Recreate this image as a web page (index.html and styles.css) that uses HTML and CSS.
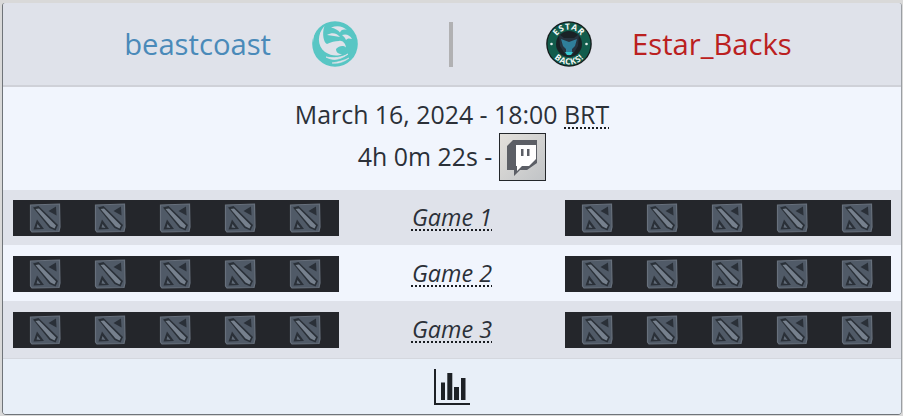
FILE: index.html
```html
<!DOCTYPE html>
<html lang="en">
<head>
<meta charset="utf-8">
<title>Match</title>
<link rel="stylesheet" href="styles.css">
</head>
<body>
<svg class="defs" width="0" height="0" aria-hidden="true">
  <defs>
    <symbol id="dota" viewBox="0 0 32 30">
      <path d="M1.500 2 L30.500 1 L31 24 L30 28.500 L3 29 L1.500 27 Z" fill="#505a67" stroke="#67707c" stroke-width="1.200"/>
      <path d="M4 4.500 L9.500 3 L29 22 L26.500 27.500 L20.500 25 Z" fill="#2a3038"/>
      <path d="M6.500 6 L10 5.500 L27 22.500 L25.500 25.500 L21.500 23.500 Z" fill="#76808d"/>
      <path d="M27 3.500 L27.500 12.500 L19.500 8 Z" fill="#2a3038"/>
      <path d="M4.500 26.500 L8 16.500 L15 26 Z" fill="#2a3038"/>
      <path d="M7.500 24.500 L8.500 21 L11.500 25 Z" fill="#616b78"/>
    </symbol>
  </defs>
</svg>
<main class="card">
  <header class="teams">
    <div class="team team-left">
      <span class="name name-blue">beastcoast</span>
      <svg class="logo" viewBox="0 0 46 46" aria-hidden="true">
        <circle cx="23" cy="23" r="22.800" fill="#58c6c4"/>
        <path d="M12.500 5 C5 13 5 25 13 31 C19 35 26 35.500 30 33 C26 33 24 31 24 28 C27 25 31 24 34 26.500 C33.500 22 30 19 27 20 C23 20 19 21 15 23 C12 22 9.500 13 12.500 5 Z" fill="#dfe2ea"/>
        <path d="M0 6 L9 0 L16 0 C12 1.500 9 3 7 5 C3 10 1.500 15 1 22 Z" fill="#dfe2ea"/>
        <path d="M14 36 C21 40 28 39 36 33 C30 36.500 22 37.500 14 36 Z" fill="#dfe2ea" stroke="#dfe2ea" stroke-width="0.800"/>
        <path d="M20 42 C26 43 32 41 37 37 C32 39.500 26 41 20 42 Z" fill="#dfe2ea" stroke="#dfe2ea" stroke-width="0.600"/>
        <path d="M15 14 C20 11 25 12 28 16 C24 15 20 15 15 14 Z" fill="#dfe2ea"/>
        <path d="M19 6.500 C25 4 31 5 35 9 C31 8 29 9 28 11.500 C26 9 23 7.500 19 6.500 Z" fill="#dfe2ea"/>
        <path d="M30 14 C34 12.500 38 14 40 18 C37 17 35 17.500 34 19 C33 17 32 15.500 30 14 Z" fill="#dfe2ea"/>
      </svg>
    </div>
    <div class="divider"></div>
    <div class="team team-right">
      <svg class="logo" viewBox="0 0 46 46" aria-hidden="true">
        <circle cx="23" cy="23" r="22.800" fill="#161c1c"/>
        <circle cx="23" cy="23" r="21.500" fill="#125c4c"/>
        <circle cx="23" cy="23" r="13" fill="#1a2226"/>
        <path d="M13 13 L18 17 L28 17 L33 13 L32 25 L27 33 L23 35 L19 33 L14 25 Z" fill="#26343f"/>
        <path d="M15 18 L23 21 L31 18 L29 25 L26 28 L26 32 L20 32 L20 28 L17 25 Z" fill="#2f7f9a"/>
        <path d="M19 31 L27 31 L25 34 L21 34 Z" fill="#37c7cf"/>
        <circle cx="5.500" cy="23" r="1.300" fill="#e6f0ec"/>
        <circle cx="40.500" cy="23" r="1.300" fill="#e6f0ec"/>
        <path id="arc-top" d="M8.500 23 A14.500 14.500 0 0 1 37.500 23" fill="none"/>
        <path id="arc-bottom" d="M2.500 23 A20.500 20.500 0 0 0 43.500 23" fill="none"/>
        <text class="logo-text"><textPath href="#arc-top" startOffset="50%" text-anchor="middle">ESTAR</textPath></text>
        <text class="logo-text"><textPath href="#arc-bottom" startOffset="50%" text-anchor="middle">BACKS!</textPath></text>
      </svg>
      <span class="name name-red">Estar_Backs</span>
    </div>
  </header>

  <section class="info">
    <div class="info-line">March 16, 2024 - 18:00 <abbr class="dotted">BRT</abbr></div>
    <div class="info-line info-stream">
      <span class="countdown">4h 0m 22s -</span>
      <span class="twitch">
        <svg viewBox="0 0 47 48" width="47" height="48" aria-hidden="true">
          <path d="M14 7 L38 7 L38 30 L28 37 L21 37 L15 43 L15 37 L8 37 L8 13 Z" fill="#5c5f66"/>
          <path d="M17 12 H37 V26 L30 33 H23 L18 38 V33 H17 Z" fill="#ffffff"/>
          <rect x="22" y="16" width="2.500" height="7" fill="#5c5f66"/>
          <rect x="28" y="16" width="2.500" height="7" fill="#5c5f66"/>
        </svg>
      </span>
    </div>
  </section>

  <section class="game game-shade game-first">
    <div class="draft">
      <svg class="hero"><use href="#dota"/></svg><svg class="hero"><use href="#dota"/></svg><svg class="hero"><use href="#dota"/></svg><svg class="hero"><use href="#dota"/></svg><svg class="hero"><use href="#dota"/></svg>
    </div>
    <div class="game-label"><span class="dotted">Game 1</span></div>
    <div class="draft">
      <svg class="hero"><use href="#dota"/></svg><svg class="hero"><use href="#dota"/></svg><svg class="hero"><use href="#dota"/></svg><svg class="hero"><use href="#dota"/></svg><svg class="hero"><use href="#dota"/></svg>
    </div>
  </section>
  <section class="game">
    <div class="draft">
      <svg class="hero"><use href="#dota"/></svg><svg class="hero"><use href="#dota"/></svg><svg class="hero"><use href="#dota"/></svg><svg class="hero"><use href="#dota"/></svg><svg class="hero"><use href="#dota"/></svg>
    </div>
    <div class="game-label"><span class="dotted">Game 2</span></div>
    <div class="draft">
      <svg class="hero"><use href="#dota"/></svg><svg class="hero"><use href="#dota"/></svg><svg class="hero"><use href="#dota"/></svg><svg class="hero"><use href="#dota"/></svg><svg class="hero"><use href="#dota"/></svg>
    </div>
  </section>
  <section class="game game-shade game-last">
    <div class="draft">
      <svg class="hero"><use href="#dota"/></svg><svg class="hero"><use href="#dota"/></svg><svg class="hero"><use href="#dota"/></svg><svg class="hero"><use href="#dota"/></svg><svg class="hero"><use href="#dota"/></svg>
    </div>
    <div class="game-label"><span class="dotted">Game 3</span></div>
    <div class="draft">
      <svg class="hero"><use href="#dota"/></svg><svg class="hero"><use href="#dota"/></svg><svg class="hero"><use href="#dota"/></svg><svg class="hero"><use href="#dota"/></svg><svg class="hero"><use href="#dota"/></svg>
    </div>
  </section>

  <footer class="stats">
    <svg viewBox="0 0 36 36" width="36" height="36" aria-hidden="true">
      <rect x="0" y="0" width="2" height="36" fill="#1d2126"/>
      <rect x="0" y="34" width="36" height="2" fill="#1d2126"/>
      <rect x="7" y="13.500" width="4" height="17.500" fill="#1d2126"/>
      <rect x="13.300" y="4" width="5" height="27" fill="#1d2126"/>
      <rect x="20" y="18" width="5" height="13" fill="#1d2126"/>
      <rect x="27" y="9" width="4.500" height="22" fill="#1d2126"/>
    </svg>
  </footer>
</main>
</body>
</html>
```

FILE: styles.css
```css
* {
  box-sizing: border-box;
}

html,
body {
  height: 100%;
}

body {
  margin: 0;
  padding: 3px 2px 2px 3px;
  background: #d9d9d9;
  font-family: "Open Sans", "Noto Sans", sans-serif;
  color: #2b3038;
  overflow: hidden;
}

.defs {
  position: absolute;
}

.card {
  height: 411px;
  display: flex;
  flex-direction: column;
  background: #f1f5fd;
  box-shadow: -1px 0 0 #6f7479, 0 1px 0 #6f7479, 1px 0 0 #9a9ea3;
  border-radius: 3px;
  overflow: hidden;
}

.teams {
  height: 84px;
  flex: none;
  display: flex;
  align-items: center;
  background: #dfe2ea;
  border-bottom: 2px solid #cfd1d8;
}

.team {
  flex: 1;
  display: flex;
  align-items: center;
}

.team-left {
  justify-content: flex-end;
  gap: 41px;
  padding-right: 91px;
}

.team-right {
  justify-content: flex-start;
  gap: 40px;
  padding-left: 93px;
}

.name {
  font-size: 29.200px;
  line-height: 36px;
}

.name-blue {
  color: #4a8ab9;
}

.name-red {
  color: #bb2020;
}

.logo {
  width: 46px;
  height: 46px;
  flex: none;
}

.logo-text {
  font-family: "Open Sans", sans-serif;
  font-size: 8.500px;
  font-weight: 700;
  fill: #f4f7f5;
  letter-spacing: 0.600px;
}

.divider {
  width: 4px;
  height: 45px;
  flex: none;
  background: #b1b1b3;
}

.info {
  height: 103px;
  flex: none;
  padding-top: 10px;
  text-align: center;
  font-size: 24.900px;
  line-height: 34px;
}

.info-stream {
  display: flex;
  justify-content: center;
  align-items: center;
  gap: 7px;
  margin-top: 2px;
}

.countdown {
  padding-bottom: 3px;
}

.dotted {
  text-decoration: underline dotted #1a1d22 2px;
  text-underline-offset: 3px;
}

.twitch {
  width: 47px;
  height: 48px;
  display: flex;
  background: linear-gradient(135deg, #e4e1dc, #c0c3c6);
  outline: 1px solid #24272b;
  outline-offset: -1px;
}

.game {
  height: 56px;
  flex: none;
  display: flex;
  align-items: flex-start;
  justify-content: space-between;
  padding: 11px 10px 0;
}

.game-first {
  height: 55px;
  padding-top: 10px;
}

.game-last {
  height: 57px;
}

.game-shade {
  background: #dfe2ea;
}

.draft {
  width: 326px;
  height: 36px;
  display: grid;
  grid-template-columns: repeat(5, 1fr);
  align-items: center;
  justify-items: center;
  padding-right: 2px;
  background: #24262b;
}

.hero {
  width: 32px;
  height: 30px;
}

.game-label {
  flex: 1;
  text-align: center;
  font-style: italic;
  font-size: 23.400px;
  line-height: 34px;
}

.stats {
  flex: 1;
  display: flex;
  align-items: center;
  justify-content: center;
  background: #e8eff8;
  border-top: 1px solid #d4d7de;
}
```
